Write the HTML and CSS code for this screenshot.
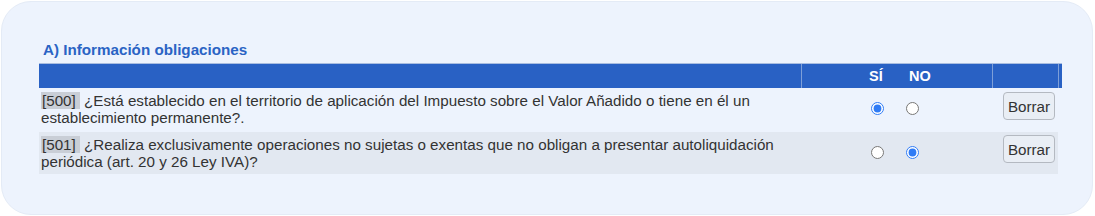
FILE: index.html
```html
<!DOCTYPE html>
<html lang="es">
<head>
<meta charset="utf-8">
<link rel="stylesheet" href="styles.css">
</head>
<body>
<div class="card">
  <h2 class="title">A) Información obligaciones</h2>
  <div class="table">
    <div class="thead">
      <div class="th th-text"></div>
      <div class="th th-opts"><span class="lbl-si">SÍ</span><span class="lbl-no">NO</span></div>
      <div class="th th-btn"></div>
      <div class="th th-end"></div>
    </div>
    <div class="row">
      <div class="cell text"><span class="code">[500]</span> ¿Está establecido en el territorio de aplicación del Impuesto sobre el Valor Añadido o tiene en él un establecimiento permanente?.</div>
      <div class="cell opts"><input type="radio" name="q500" class="r-si" checked><input type="radio" name="q500" class="r-no"></div>
      <div class="cell btncell"><button class="btn">Borrar</button></div>
    </div>
    <div class="row alt">
      <div class="cell text"><span class="code">[501]</span> ¿Realiza exclusivamente operaciones no sujetas o exentas que no obligan a presentar autoliquidación periódica (art. 20 y 26 Ley IVA)?</div>
      <div class="cell opts"><input type="radio" name="q501" class="r-si"><input type="radio" name="q501" class="r-no" checked></div>
      <div class="cell btncell"><button class="btn">Borrar</button></div>
    </div>
  </div>
</div>
</body>
</html>
```

FILE: styles.css
```css
html, body {
  margin: 0;
  padding: 0;
  background: #ffffff;
}
body {
  font-family: "Liberation Sans", Arial, sans-serif;
  color: #333333;
}
.card {
  box-sizing: border-box;
  margin: 1px 2px 1px 1px;
  height: 214px;
  border-radius: 30px;
  background: #edf3fd;
  border: 1px solid #e4ebf6;
  padding: 39px 0 0 37px;
}
.title {
  margin: 0 0 4px 4px;
  font-size: 15.2px;
  line-height: 18px;
  font-weight: bold;
  color: #2a63c4;
}
.table {
  width: 1023px;
}
.thead {
  display: grid;
  grid-template-columns: 762px 191px 66px 4px;
  height: 25px;
  box-sizing: border-box;
  background: #2961c4;
  border-top: 1px solid #a9bde0;
}
.th {
  color: #ffffff;
  font-weight: bold;
  font-size: 14.5px;
  line-height: 24px;
}
.th-opts, .th-btn, .th-end {
  border-left: 1px solid #7e9fd8;
}
.th-opts {
  position: relative;
}
.lbl-si, .lbl-no {
  position: absolute;
  top: 0;
}
.lbl-si { left: 67px; }
.lbl-no { left: 107px; }
.row {
  display: grid;
  grid-template-columns: 762px 191px 66px;
  width: 1019px;
  height: 42px;
  margin-bottom: 2px;
}
.row.alt {
  background: #e2e8f1;
}
.cell.text {
  box-sizing: border-box;
  padding: 4px 2px 0 2px;
  font-size: 15.2px;
  line-height: 17px;
  color: #333333;
}
.code {
  background: #c9ced6;
  padding: 0 4px 0 1px;
}
.opts {
  position: relative;
}
.opts input {
  position: absolute;
  top: 50%;
  margin: -7px 0 0 0;
  width: 13px;
  height: 13px;
  accent-color: #2f7bf5;
}
.r-si { left: 70px; }
.r-no { left: 105px; }
.btncell {
  padding: 4px 0 0 11px;
}
.alt .btncell {
  padding-top: 3px;
}
.btn {
  box-sizing: border-box;
  width: 52px;
  height: 28px;
  padding: 0;
  font-family: "Liberation Sans", Arial, sans-serif;
  font-size: 15.2px;
  color: #333333;
  background: #e9eef5;
  border: 1px solid #b4b9c1;
  border-radius: 4px;
}
```
